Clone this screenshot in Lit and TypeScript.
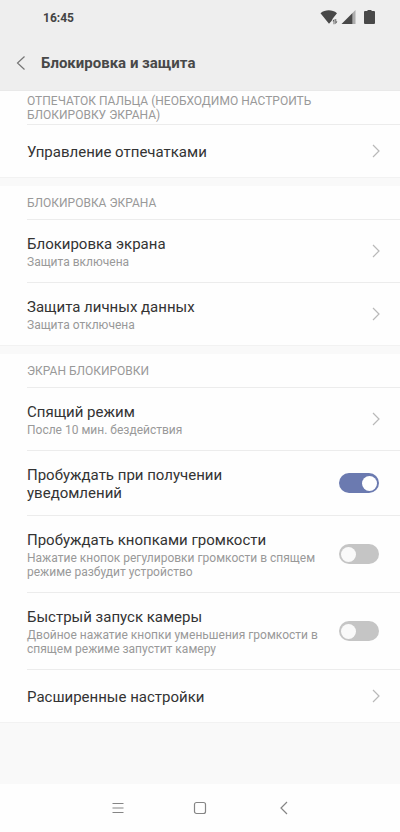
import { LitElement, html, css, nothing } from "lit";
import { customElement, property, state } from "lit/decorators.js";

interface Item {
  id: string;
  title: string;
  note?: string;
  on?: boolean;
}

interface Group {
  heading: string;
  items: Item[];
}

@customElement("setting-row")
export class SettingRow extends LitElement {
  static styles = css`
    :host {
      display: block;
      background: #fefefe;
    }
    .row {
      display: flex;
      align-items: center;
      justify-content: space-between;
      gap: 16px;
      box-sizing: border-box;
      width: 100%;
      min-height: 52px;
      padding: 13px 20px 13px 27px;
      color: #333;
      text-decoration: none;
      cursor: pointer;
    }
    .text {
      display: flex;
      flex-direction: column;
      gap: 2px;
      min-width: 0;
      padding-top: 2px;
    }
    .title {
      font-size: 15px;
      line-height: 18px;
    }
    .note {
      font-size: 12px;
      line-height: 14px;
      color: #999;
    }
    .narrow {
      max-width: 248px;
    }
    .arrow {
      flex: none;
      width: 8px;
      height: 16px;
      fill: none;
      stroke: #b9b9b9;
      stroke-width: 1.2;
    }
    .switch {
      appearance: none;
      flex: none;
      display: flex;
      align-items: center;
      box-sizing: border-box;
      width: 40px;
      height: 20px;
      margin: 0 1px 0 0;
      padding: 0 2px;
      border-radius: 10px;
      background: #c5c5c5;
      cursor: pointer;
    }
    .switch::before {
      content: "";
      width: 15px;
      height: 15px;
      border-radius: 50%;
      background: #f9f9f9;
    }
    .switch:checked {
      justify-content: flex-end;
      background: #6b7ab0;
    }
    .switch:checked::before {
      background: #fff;
    }
  `;

  @property({ attribute: false }) item!: Item;

  render() {
    const { id, title, note, on } = this.item;
    const text = html`<span class="text">
      <span class="title ${on === undefined ? "" : "narrow"}">${title}</span>
      ${note ? html`<span class="note">${note}</span>` : nothing}
    </span>`;
    if (on === undefined) {
      return html`<a class="row" href="#${id}">
        ${text}
        <svg class="arrow" viewBox="0 0 8 16" aria-hidden="true">
          <path d="M1 2 7 8 1 14" />
        </svg>
      </a>`;
    }
    return html`<label class="row" for=${id}>
      ${text}
      <input class="switch" id=${id} type="checkbox" role="switch" .checked=${on} />
    </label>`;
  }
}

@customElement("app-root")
export class AppRoot extends LitElement {
  static styles = css`
    :host {
      display: flex;
      flex-direction: column;
      min-height: 100vh;
      background: #f9f9f9;
      color: #333;
      font-family: Roboto, "Noto Sans", sans-serif;
    }
    .top {
      background: #eee;
      border-bottom: 1px solid #e9e9e9;
    }
    .status {
      display: flex;
      align-items: center;
      justify-content: space-between;
      height: 36px;
      padding: 0 24px 0 43px;
      font-size: 12px;
      font-weight: 700;
      color: #444;
    }
    .signals {
      fill: #484848;
    }
    .bar {
      display: flex;
      align-items: center;
      gap: 8px;
      height: 54px;
      padding: 0 16px 0 9px;
    }
    .back {
      display: grid;
      place-items: center;
      width: 24px;
      height: 32px;
      padding: 0;
      border: 0;
      background: none;
    }
    .line {
      fill: none;
      stroke: #757575;
      stroke-width: 1.2;
    }
    h1 {
      margin: 0;
      font-size: 15px;
      line-height: 18px;
      font-weight: 700;
      color: #484848;
    }
    main {
      flex: 1;
      display: flex;
      flex-direction: column;
      gap: 8px;
    }
    .group {
      background: #fefefe;
      border-bottom: 1px solid #f2f2f2;
    }
    h2 {
      display: flex;
      align-items: center;
      box-sizing: border-box;
      height: 33px;
      margin: 0;
      padding: 0 60px 0 27px;
      font-size: 12px;
      line-height: 14px;
      font-weight: 400;
      color: #999;
      text-transform: uppercase;
    }
    .rule {
      height: 1px;
      margin: 0 0 0 27px;
      border: 0;
      background: #ececec;
    }
    .nav {
      display: flex;
      align-items: center;
      justify-content: center;
      gap: 44px;
      height: 48px;
      background: #fefefe;
    }
    .key {
      display: grid;
      place-items: center;
      width: 40px;
      height: 40px;
      padding: 0;
      border: 0;
      background: none;
    }
    .key .line {
      stroke: #858585;
    }
  `;

  @state() private groups: Group[] = [
    {
      heading: "Отпечаток пальца (необходимо настроить блокировку экрана)",
      items: [{ id: "fingerprints", title: "Управление отпечатками" }],
    },
    {
      heading: "Блокировка экрана",
      items: [
        { id: "lock", title: "Блокировка экрана", note: "Защита включена" },
        { id: "privacy", title: "Защита личных данных", note: "Защита отключена" },
      ],
    },
    {
      heading: "Экран блокировки",
      items: [
        { id: "sleep", title: "Спящий режим", note: "После 10 мин. бездействия" },
        { id: "wake-notify", title: "Пробуждать при получении уведомлений", on: true },
        {
          id: "wake-volume",
          title: "Пробуждать кнопками громкости",
          note: "Нажатие кнопок регулировки громкости в спящем режиме разбудит устройство",
          on: false,
        },
        {
          id: "camera",
          title: "Быстрый запуск камеры",
          note: "Двойное нажатие кнопки уменьшения громкости в спящем режиме запустит камеру",
          on: false,
        },
        { id: "advanced", title: "Расширенные настройки" },
      ],
    },
  ];

  render() {
    return html`
      <header class="top">
        <div class="status">
          <span>16:45</span>
          <svg class="signals" width="56" height="16" viewBox="0 1 56 16" aria-hidden="true">
            <path d="M.5 4.2C5.3.4 12.2.4 17 4.200L12.800 9.600 11.500 12 9 14.800Z" />
            <path d="M12.400 12.300 14.400 10v5.200h-.8v-2.900ZM17.400 12.600 15.400 15.200V10h.8v2.600Z" />
            <path d="M21.500 15 32.500 4v11Z" />
            <path d="M32.500 4 35.500 1v14h-3Z" opacity=".4" />
            <path d="M45 2h2.500V1h4v1H54q1 0 1 1v11q0 1-1 1h-9q-1 0-1-1V3q0-1 1-1Z" />
          </svg>
        </div>
        <div class="bar">
          <button class="back" aria-label="Назад">
            <svg class="line" width="10" height="16" viewBox="0 0 10 16">
              <path d="M8.500 1.500 1.500 8l7 6.500" />
            </svg>
          </button>
          <h1>Блокировка и защита</h1>
        </div>
      </header>
      <main>
        ${this.groups.map(
          (group) => html`<section class="group">
            <h2>${group.heading}</h2>
            ${group.items.map(
              (item) => html`<hr class="rule" />
                <setting-row .item=${item}></setting-row>`
            )}
          </section>`
        )}
      </main>
      <nav class="nav">
        <button class="key" aria-label="Меню">
          <svg class="line" width="16" height="14" viewBox="0 0 16 14">
            <path d="M4.500 2.500h11M4.500 7h11M4.500 11.500h11" />
          </svg>
        </button>
        <button class="key" aria-label="Домой">
          <svg class="line" width="14" height="14" viewBox="0 0 14 14">
            <rect x="1.500" y="1.500" width="11" height="11" rx="2" />
          </svg>
        </button>
        <button class="key" aria-label="Назад">
          <svg class="line" width="10" height="14" viewBox="0 0 10 14">
            <path d="M8 1 2 7l6 6" />
          </svg>
        </button>
      </nav>
    `;
  }
}
